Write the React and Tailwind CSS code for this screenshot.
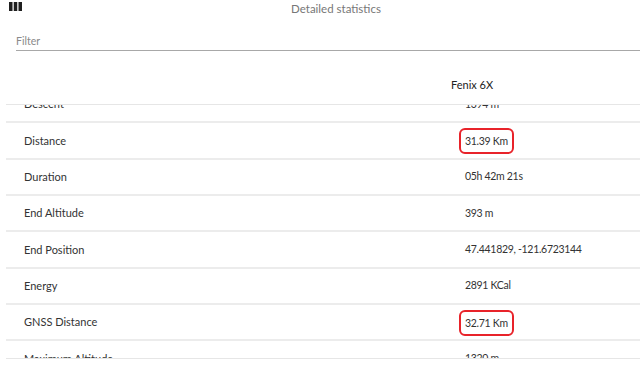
import React from 'react'

const rows = [
  ['Descent', '1394 m'],
  ['Distance', '31.39 Km', true],
  ['Duration', '05h 42m 21s'],
  ['End Altitude', '393 m'],
  ['End Position', '47.441829, -121.6723144'],
  ['Energy', '2891 KCal'],
  ['GNSS Distance', '32.71 Km', true],
  ['Maximum Altitude', '1320 m'],
]

function ColumnsIcon() {
  return (
    <svg width="13" height="9" viewBox="0 0 13 9" className="block">
      <rect x="0" y="0" width="3.5" height="9" fill="#1f1f1f" />
      <rect x="4.75" y="0" width="3.5" height="9" fill="#1f1f1f" />
      <rect x="9.5" y="0" width="3.5" height="9" fill="#1f1f1f" />
    </svg>
  )
}

export default function App() {
  return (
    <div className="w-[640px] h-[371px] bg-white overflow-hidden font-['Lato','Liberation_Sans',sans-serif] text-[11px] text-[#333]">
      {/* Barra superior */}
      <div className="flex h-[18px] items-center">
        <div className="w-[32px] pl-[9px] self-start pt-[2px]">
          <ColumnsIcon />
        </div>
        <div className="flex-1 text-center text-[#777] text-[11.5px]">Detailed statistics</div>
      </div>

      {/* Filtro */}
      <div className="ml-[16px] mt-[16px] h-[17px] border-b border-[#a8a8a8] text-[#8a8a8a] text-[10.5px] leading-[14px]">
        Filter
      </div>

      {/* Cabeçalho da tabela */}
      <div className="h-[53px] flex items-end pb-[11px] pl-[451px] text-[#222]">Fenix 6X</div>

      {/* Corpo rolado */}
      <div className="ml-[6px] h-[255px] overflow-hidden border-y border-[#e6e6e6]">
        <div className="-mt-[18px]">
          {rows.map(([nome, valor, marcado]) => (
            <div key={nome} className="flex items-center h-[36.33px] border-b-2 border-[#ececec]">
              <div className="w-[459px] pl-[18px] pt-[1px]">{nome}</div>
              <div className="pt-[1px] text-[10.5px] tracking-[-0.3px]">
                <span
                  className={
                    marcado
                      ? 'inline-block px-[4px] py-[4px] -ml-[6px] border-2 border-[#e8232a] rounded-[6px] leading-[14px]'
                      : 'inline-block leading-[14px]'
                  }
                >
                  {valor}
                </span>
              </div>
            </div>
          ))}
        </div>
      </div>
    </div>
  )
}
